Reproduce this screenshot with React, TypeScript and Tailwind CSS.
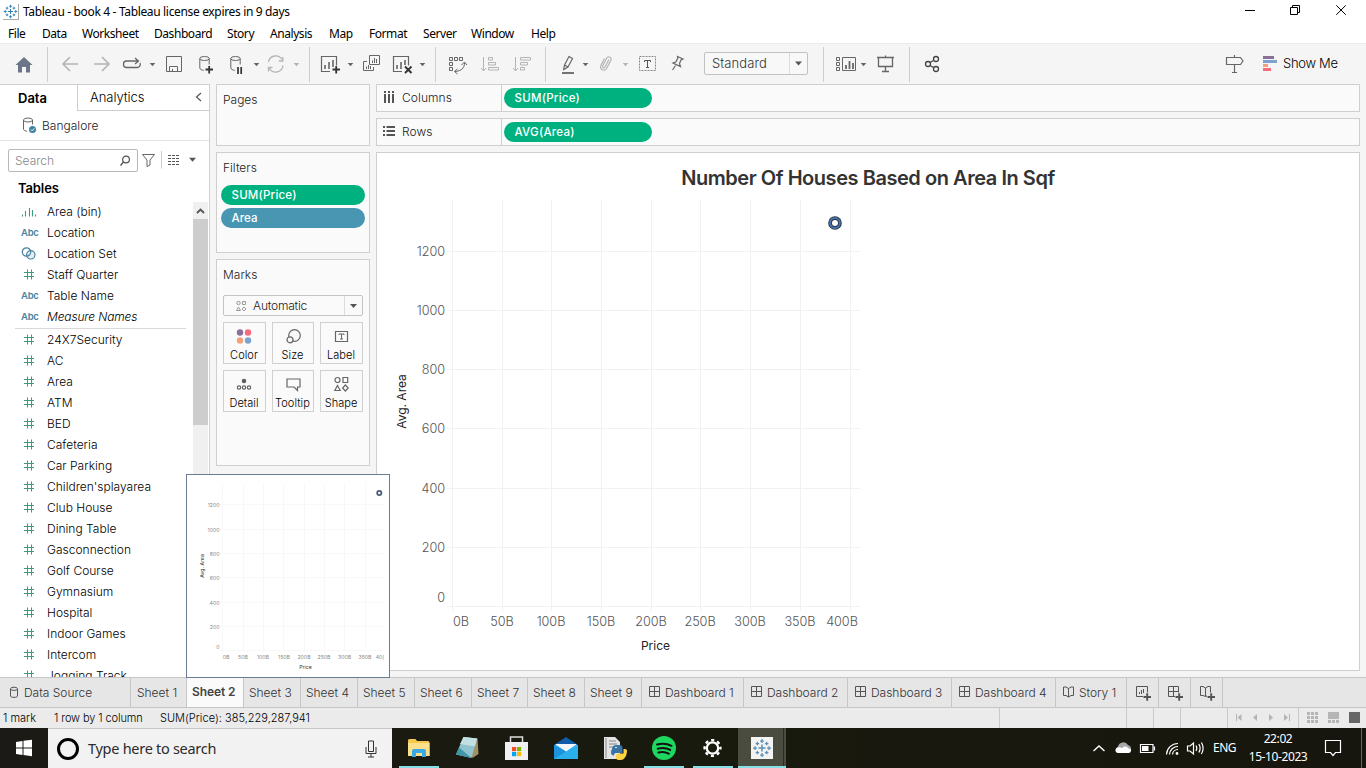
import React from "react";

type ArtProps = { x: number; y: number; w: number; h: number; children?: React.ReactNode; className?: string };

function Art({ x, y, w, h, children, className = "" }: ArtProps) {
  return (
    <svg
      width={w}
      height={h}
      viewBox={`${x} ${y} ${w} ${h}`}
      fill="none"
      stroke="#666"
      className={`block shrink-0 ${className}`}
    >
      {children}
    </svg>
  );
}

function Tool({ x, w, children }: { x: number; w: number; children?: React.ReactNode }) {
  return (
    <Art x={x} y={44} w={w} h={40}>
      {children}
    </Art>
  );
}

function Caret({ x, w, cx, color = "#666" }: { x: number; w: number; cx: number; color?: string }) {
  return (
    <Tool x={x} w={w}>
      <path d={`M${cx - 2.8} 63h5.6l-2.8 3.2z`} fill={color} stroke="none" />
    </Tool>
  );
}

function Sep() {
  return <div className="mt-[3px] h-[35px] w-px shrink-0 bg-[#cfcfcf]" />;
}

function TableauMark({ color = "#2f7fb0" }: { color?: string }) {
  return (
    <g stroke={color} strokeWidth="1">
      <path d="M8 5.2v5.6M5.2 8h5.6" strokeWidth="1.2" />
      <path d="M8 .8v3.2M6.5 2.4h3M8 12v3.2M6.5 13.6h3M2.4 6.5v3M.8 8H4M13.6 6.5v3M12 8h3.2" />
      <path d="M4.3 3v2.8M2.9 4.4h2.8M11.7 3v2.8M10.3 4.4h2.8M4.3 10.2V13M2.9 11.6h2.8M11.7 10.2V13M10.3 11.6h2.8" />
    </g>
  );
}

function TitleBar() {
  return (
    <div className="flex h-[23px] shrink-0 items-center">
      <svg width="16" height="16" viewBox="0 0 16 16" fill="none" className="ml-[3px] block border-r border-b border-[#aaa]">
        <TableauMark />
      </svg>
      <span className="ml-1 font-['Noto_Sans','Open_Sans',sans-serif] text-[12px] tracking-[-0.340px] text-black">
        Tableau - book 4 - Tableau license expires in 9 days
      </span>
      <Art x={1236} y={0} w={130} h={23} className="ml-auto">
        <g stroke="#000">
          <path d="M1245 10.5h10" />
          <path d="M1290.500 7.500h7v7h-7zM1292.500 7.500v-2h7v7h-2" />
          <path d="M1336.300 5.300l9.500 9.500M1345.800 5.300l-9.500 9.500" />
        </g>
      </Art>
    </div>
  );
}

function MenuBar() {
  return (
    <div className="flex h-5 shrink-0 items-center pt-[2px] pl-2 font-['Noto_Sans','Open_Sans',sans-serif] text-[12px] tracking-[-0.440px] text-black">
      <span className="w-[34px]">File</span>
      <span className="w-10">Data</span>
      <span className="w-[72px]">Worksheet</span>
      <span className="w-[73px]">Dashboard</span>
      <span className="w-[43px]">Story</span>
      <span className="w-[59px]">Analysis</span>
      <span className="w-10">Map</span>
      <span className="w-[54px]">Format</span>
      <span className="w-12">Server</span>
      <span className="w-[60px]">Window</span>
      <span>Help</span>
    </div>
  );
}

const LIGHT = "#b4b4b4";

function Toolbar() {
  return (
    <div className="flex h-[41px] shrink-0 items-start border-t border-[#ececec] bg-[#f5f5f5]">
      <Tool x={0} w={47}>
        <path d="M15.500 65L24 57l8.500 8H30v7.500h-4V67h-4v5.500h-4V65z" fill="#6b7688" stroke="none" />
      </Tool>
      <Sep />
      <Tool x={48} w={36}>
        <path d="M78 64H63M70 57l-7 7 7 7" stroke={LIGHT} strokeWidth="1.6" />
      </Tool>
      <Tool x={84} w={34}>
        <path d="M94 64h15M102 57l7 7-7 7" stroke={LIGHT} strokeWidth="1.6" />
      </Tool>
      <Tool x={118} w={26}>
        <path d="M138 61h-11.500a3 3 0 0 0-3 3v.500a3 3 0 0 0 3 3h11a3.200 3.200 0 0 0 2.500-4.500M135 58l3.500 3-3.500 3" strokeWidth="1.300" />
      </Tool>
      <Caret x={144} w={16} cx={152.500} />
      <Tool x={160} w={30}>
        <path d="M166.500 56.500h15v15h-15zM169.500 71.500v-5h8v5M172.500 71.500v-2.500" />
      </Tool>
      <Tool x={190} w={32}>
        <ellipse cx="204.500" cy="58.500" rx="4.700" ry="2" />
        <path d="M199.800 58.500v9.500c0 1.200 2 2.200 4 2.400M209.200 58.500v6" />
        <path d="M205.500 69.500h7.500M209.200 66v7.500" stroke="#333" strokeWidth="1.800" />
      </Tool>
      <Tool x={222} w={27}>
        <ellipse cx="235.500" cy="58.500" rx="4.700" ry="2" />
        <path d="M230.800 58.500v9.500c0 1.200 2 2.200 4 2.400M240.200 58.500v6" />
        <path d="M238 67v7M241.200 67v7" stroke="#333" strokeWidth="1.700" />
      </Tool>
      <Caret x={249} w={15} cx={256.500} />
      <Tool x={264} w={26}>
        <path d="M268.500 62a7.300 7.300 0 0 1 13.500-2.500M283 65.500a7.300 7.300 0 0 1-13.500 3M282.800 57v4h-4M268.500 71.500v-4h4" stroke={LIGHT} strokeWidth="1.300" />
      </Tool>
      <Caret x={290} w={19} cx={296.500} color={LIGHT} />
      <Sep />
      <Tool x={310} w={34}>
        <path d="M330 71.500h-8.500v-15h15v9" strokeWidth="1.200" />
        <path d="M325 69v-4M329 69v-7M333 67v-7" strokeWidth="1.600" />
        <path d="M332.500 69.500h7.500M336.200 66v7.500" stroke="#333" strokeWidth="1.800" />
      </Tool>
      <Caret x={344} w={14} cx={350.500} />
      <Tool x={358} w={28}>
        <path d="M369.500 55.500h10v9h-10zM367 61.500h-3.500v9h10v-3.500M372.500 63v-2.500M374.500 63v-5M376.500 63v-4M366.500 69v-2.500M368.500 69v-4M370.500 69v-3" />
      </Tool>
      <Tool x={386} w={30}>
        <path d="M402 71.500h-8.500v-15h15v9" strokeWidth="1.200" />
        <path d="M397 69v-4M401 69v-7M405 65v-5" strokeWidth="1.600" />
        <path d="M405 66.500l6.500 6.500M411.500 66.500l-6.500 6.500" stroke="#333" strokeWidth="1.900" />
      </Tool>
      <Caret x={416} w={19} cx={422.500} />
      <Sep />
      <Tool x={436} w={38}>
        <path d="M449.500 57.500h3v3h-3zM454.500 57.500h3v3h-3zM459.500 57.500h3v3h-3zM449.500 62.500h3v3h-3zM449.500 67.500h3v3h-3z" />
        <path d="M464.500 63c0 5-3 8-9.500 8.500M461.500 65l3-3 2.500 3M457.500 69l-3 2.500 3 2.500" />
      </Tool>
      <Tool x={474} w={31}>
        <path d="M483.500 57v13.500M481 68l2.500 3 2.500-3M488.500 57.500h4v2.500h-4zM488.500 62.500h7v2.500h-7zM488.500 67.500h10v2.500h-10z" stroke={LIGHT} />
      </Tool>
      <Tool x={505} w={40}>
        <path d="M515.500 57v13.500M513 68l2.500 3 2.500-3M520.500 57.500h10v2.500h-10zM520.500 62.500h7v2.500h-7zM520.500 67.500h4v2.500h-4z" stroke={LIGHT} />
      </Tool>
      <Sep />
      <Tool x={546} w={32}>
        <path d="M569 56.500l3.500 2-4.500 8.500-3.500-2zM564.500 65l-.800 4.500 4.300-2.500" strokeWidth="1.200" />
        <path d="M562 73h12" strokeWidth="1.800" />
      </Tool>
      <Caret x={578} w={15} cx={585.500} />
      <Tool x={593} w={26}>
        <path d="M609 59.500l-4 7.500c-.800 1.500-3 .500-2.300-1.200l4-7.500c1.500-2.600 5.500-.800 4.200 2l-4.200 8c-2 3.600-7.500 1.200-5.800-2.800l3.600-7" stroke={LIGHT} strokeWidth="1.200" />
      </Tool>
      <Caret x={619} w={16} cx={625.500} color={LIGHT} />
      <Tool x={635} w={25}>
        <path d="M639.500 56.500h16v14h-16z" strokeDasharray="2 1" stroke="#888" />
        <path d="M644.500 62v-1.500h6v1.500M647.500 60.500v7M646 67.500h3" stroke="#555" />
      </Tool>
      <Tool x={660} w={44}>
        <path d="M677.500 56.500l5.500 2.500-2 1-1.500 3.500 1 3-7.500-3.500 3-1.200 1.700-3.500zM675.500 65.500l-3 4.500" strokeWidth="1.200" />
      </Tool>
      <div className="mt-2 flex h-[23px] w-[104px] items-center rounded-[2px] border border-[#c2c2c2] bg-[#f8f8f8]">
        <span className="w-[84px] pl-[7px] text-[13px] font-light tracking-[0.100px] text-[#333]">Standard</span>
        <div className="flex h-full w-[18px] items-center justify-center border-l border-[#dcdcdc]">
          <svg width="7" height="5" viewBox="0 0 7 5"><path d="M0 .5h7l-3.500 4z" fill="#555" /></svg>
        </div>
      </div>
      <div className="w-[15px]" />
      <Sep />
      <Tool x={824} w={34}>
        <path d="M836.500 57.500h3v3h-3zM836.500 62.500h3v3h-3zM836.500 67.500h3v3h-3zM842.500 57.500h13v13h-13z" />
        <path d="M846 69v-4M849.500 69v-8M853 69v-6" strokeWidth="1.800" />
      </Tool>
      <Caret x={858} w={12} cx={863.500} />
      <Tool x={870} w={39}>
        <path d="M877 57.500h17M878.500 58v8.500h14V58M885.500 55.500v2M885.500 66.500v5M882 71.500h7" strokeWidth="1.300" />
      </Tool>
      <Sep />
      <Tool x={910} w={40}>
        <path d="M930 62.500l3.500-2M930 65.500l3.500 2" stroke="#444" strokeWidth="1.300" />
        <circle cx="928" cy="64" r="2.500" stroke="#444" strokeWidth="1.300" />
        <circle cx="936" cy="59" r="2.500" stroke="#444" strokeWidth="1.300" />
        <circle cx="936" cy="69" r="2.500" stroke="#444" strokeWidth="1.300" />
      </Tool>
      <div className="flex-1" />
      <Tool x={1220} w={32}>
        <path d="M1234.500 55v2.500M1234.500 64.500v8M1232 72.500h5M1226.500 57.500h14l2.500 3.500-2.500 3.500h-14z" strokeWidth="1.200" />
      </Tool>
      <Tool x={1252} w={31}>
        <g stroke="none">
          <path d="M1263 56h11v3h-11z" fill="#8a6f97" />
          <path d="M1263 60h14v3h-14z" fill="#7ba3cd" />
          <path d="M1263 64h5v3h-5z" fill="#f2a279" />
          <path d="M1263 68h8v3h-8z" fill="#f76c7c" />
        </g>
      </Tool>
      <span className="mt-[9px] w-[83px] text-[13px] leading-5 font-light tracking-[-0.300px] text-black">Show Me</span>
    </div>
  );
}

function FieldIcon({ kind }: { kind: string }) {
  if (kind === "abc")
    return <span className="w-8 pt-[2px] pl-[6px] text-[9.500px] font-semibold tracking-[-0.250px] text-[#4a83a0]">Abc</span>;
  return (
    <svg width="32" height="21" viewBox="0 0 32 21" fill="none" stroke="#3b9c76" className="block">
      {kind === "num" && <path d="M12.500 5.500v10M16.500 5.500v10M9 8.500h10M9 12.500h10" />}
      {kind === "bin" && <path d="M7.500 13.500v2M10.500 10v5.500M14.500 7v8.500M17.500 9v6.500M20.500 13.500v2" strokeWidth="1.100" />}
      {kind === "set" && (
        <g stroke="#4a83a0" strokeWidth="1.200">
          <circle cx="11.500" cy="9" r="4.200" />
          <circle cx="15.800" cy="11.800" r="4.200" fill="#4a83a0" fillOpacity=".15" />
        </g>
      )}
    </svg>
  );
}

const dimensions: [string, string][] = [
  ["bin", "Area (bin)"],
  ["abc", "Location"],
  ["set", "Location Set"],
  ["num", "Staff Quarter"],
  ["abc", "Table Name"],
  ["abc", "Measure Names"],
];

const measures = [
  "24X7Security", "AC", "Area", "ATM", "BED", "Cafeteria", "Car Parking", "Children'splayarea", "Club House",
  "Dining Table", "Gasconnection", "Golf Course", "Gymnasium", "Hospital", "Indoor Games", "Intercom", "Jogging Track",
];

function Field({ kind, name }: { kind: string; name: string }) {
  return (
    <div className="flex h-[21px] shrink-0 items-center">
      <FieldIcon kind={kind} />
      <span className={name === "Measure Names" ? "tracking-[-0.150px] italic" : ""}>{name}</span>
    </div>
  );
}

function DataPane() {
  return (
    <div className="flex w-[210px] shrink-0 flex-col border-t border-r border-[#cfcfcf] bg-white">
      <div className="flex h-[26px] shrink-0 text-[13px]">
        <div className="w-[77px] shrink-0 pl-[18px] leading-[26px] font-semibold text-black">Data</div>
        <div className="flex w-[132px] shrink-0 items-center border-b border-l border-[#cfcfcf] pt-px">
          <span className="w-[104px] shrink-0 pl-3 text-[13px] font-light tracking-[-0.050px] text-black">Analytics</span>
          <svg width="28" height="16" viewBox="0 0 28 16" fill="none" stroke="#555" className="shrink-0"><path d="M19 3L14.500 7l4.500 4" strokeWidth="1.200" /></svg>
        </div>
      </div>
      <div className="flex h-[30px] shrink-0 items-center border-b border-[#e2e2e2] text-[12px] font-light tracking-[0.020px] text-[#222]">
        <Art x={0} y={111} w={42} h={29}>
          <ellipse cx="28" cy="120" rx="4.500" ry="2" />
          <path d="M23.500 120v9c0 1.200 1.500 2 3.500 2.200M32.500 120v4.500" />
          <circle cx="32.500" cy="129.500" r="3.500" fill="#3c82a3" stroke="none" />
          <path d="M30.800 129.500l1.300 1.300 2.200-2.400" stroke="#fff" />
        </Art>
        Bangalore
      </div>
      <div className="flex shrink-0 items-center pt-2">
        <div className="ml-2 flex h-[23px] w-[130px] items-center rounded-[2px] border border-[#b8b8b8] text-[12px] font-light text-[#888]">
          <span className="w-[110px] pt-px pl-[6px]">Search</span>
          <svg width="12" height="14" viewBox="0 0 12 14" fill="none" stroke="#555"><circle cx="7" cy="5.500" r="3.400" strokeWidth="1.200" /><path d="M4.500 8L1.500 11.500" strokeWidth="1.300" /></svg>
        </div>
        <Art x={138} y={149} w={70} h={23}>
          <path d="M142.500 154.500h12l-4.500 5.500v5l-3 1.500V160z" />
          <path d="M161.500 151v17.500" stroke="#ccc" />
          <path d="M168 155.500h12M168 158.500h12M168 161.500h12M168 164.500h12" strokeDasharray="3 1" stroke="#555" />
          <path d="M189 157.800h7l-3.500 4z" fill="#555" stroke="none" />
        </Art>
      </div>
      <div className="shrink-0 pt-[6px] pl-[18px] text-[13px] leading-[20px] font-semibold tracking-[-0.120px] text-black">Tables</div>
      <div className="mt-[3px] flex min-h-0 flex-1">
        <div className="flex w-[193px] flex-col overflow-hidden pl-[15px] text-[12px] font-light tracking-[0.010px] text-black">
          {dimensions.map(([k, n]) => <Field key={n} kind={k} name={n} />)}
          <div className="mt-px mr-[7px] h-px shrink-0 bg-[#d9d9d9]" />
          {measures.map((n) => <Field key={n} kind="num" name={n} />)}
        </div>
        <div className="mt-px flex w-[15px] flex-col bg-[#f0f0f0]">
          <svg width="15" height="17" viewBox="0 0 15 17" fill="none" stroke="#555"><path d="M4 11l3.500-3.500L11 11" strokeWidth="1.800" /></svg>
          <div className="h-[206px] bg-[#cdcdcd]" />
        </div>
      </div>
    </div>
  );
}

function MarkButton({ label, children }: { label: string; children: React.ReactNode }) {
  return (
    <div className="flex h-[42px] flex-col items-center border border-[#d0d0d0] bg-[#fafafa] pr-px">
      <svg width="24" height="24" viewBox="0 0 24 24" fill="none" stroke="#666" strokeWidth="1.200" className="mt-[1px] block shrink-0">{children}</svg>
      <span className="pt-px text-[11px] leading-[13px] font-light tracking-[0.050px] whitespace-nowrap text-black">{label}</span>
    </div>
  );
}

function Cards() {
  return (
    <div className="flex w-[166px] shrink-0 flex-col gap-[6px] pr-[6px] pl-[6px] text-[12px] leading-[18px] font-light text-[#222]">
      <div className="h-[62px] border border-[#cfcfcf] bg-[#fafafa] px-[6px] pt-[6px]">Pages</div>
      <div className="h-[101px] border border-[#cfcfcf] bg-[#fafafa] px-1">
        <div className="pt-[6px] pl-[2px]">Filters</div>
        <div className="mt-2 h-5 rounded-full bg-[#00b180] pl-[10.500px] text-[11.500px] leading-5 font-medium tracking-[0.200px] text-white">SUM(Price)</div>
        <div className="mt-[3px] h-5 rounded-full bg-[#4996b2] pl-[10.500px] text-[11.500px] leading-5 font-medium tracking-[0.100px] text-white">Area</div>
      </div>
      <div className="h-[207px] border border-[#cfcfcf] bg-[#fafafa] px-[6px] pt-[6px]">
        Marks
        <div className="mt-[11px] flex h-[21px] items-center rounded-[2px] border border-[#c4c4c4]">
          <svg width="29" height="18" viewBox="0 0 29 18" fill="none" stroke="#999" className="shrink-0">
            <circle cx="14.500" cy="6" r="1.700" /><path d="M18.500 4.500h3v3h-3zM14.500 10l2 3.500h-4zM20 10l2 2-2 2-2-2z" />
          </svg>
          <span className="w-[91px] shrink-0 text-[12px] tracking-[-0.200px]">Automatic</span>
          <div className="flex h-full flex-1 items-center justify-center border-l border-[#dcdcdc]">
            <svg width="7" height="4" viewBox="0 0 7 4"><path d="M0 0h7l-3.500 4z" fill="#555" /></svg>
          </div>
        </div>
        <div className="mt-[6px] grid grid-cols-[43px_42px_43px] gap-[6px]">
          <MarkButton label="Color">
            <g stroke="none">
              <circle cx="8" cy="8.500" r="3.200" fill="#8a6f97" /><circle cx="16" cy="8.500" r="3.200" fill="#f76c7c" />
              <circle cx="8" cy="16.500" r="3.200" fill="#f2a279" /><circle cx="16" cy="16.500" r="3.200" fill="#7ba3cd" />
            </g>
          </MarkButton>
          <MarkButton label="Size">
            <circle cx="13.500" cy="11.500" r="5.800" /><circle cx="9" cy="15.800" r="3" fill="#fafafa" />
          </MarkButton>
          <MarkButton label="Label">
            <path d="M6.500 7.500h12v10h-12z" /><path d="M10 11v-1h5v1M12.500 10v5M11 15h3" strokeWidth="1" />
          </MarkButton>
          <MarkButton label="Detail">
            <circle cx="12" cy="9" r="1.700" fill="#555" /><circle cx="7" cy="15.500" r="1.700" /><circle cx="12" cy="15.500" r="1.700" /><circle cx="17" cy="15.500" r="1.700" />
          </MarkButton>
          <MarkButton label="Tooltip"><path d="M6 7h13v8h-2.500v3.500L13 15H6z" /></MarkButton>
          <MarkButton label="Shape">
            <circle cx="8.500" cy="8" r="2.500" /><path d="M14 5.500h4.700v5H14zM8.500 13.500l2.700 5H5.800zM16.400 13l2.800 3-2.800 3-2.800-3z" />
          </MarkButton>
        </div>
      </div>
    </div>
  );
}

function Shelf({ label, pill, rows }: { label: string; pill: string; rows?: boolean }) {
  return (
    <div className="flex h-7 border border-[#cfcfcf] bg-[#fafafa]">
      <div className="flex w-[125px] items-center border-r border-[#cfcfcf] text-[12px] font-light tracking-[0.080px] text-[#222]">
        <svg width="25" height="26" viewBox="0 0 25 26" fill="none" stroke="#555" strokeWidth="2">
          {rows ? (
            <path d="M6 8h2M9.500 8H18M6 12h2M9.500 12H18M6 16h2M9.500 16H18" />
          ) : (
            <path d="M8 6v2M8 9v9M12 6v2M12 9v9M16 6v2M16 9v9" />
          )}
        </svg>
        {label}
      </div>
      <div className="mt-[3px] ml-[2px] h-5 w-[148px] rounded-full bg-[#00b180] pl-[10.500px] text-[11.500px] leading-5 font-medium tracking-[0.250px] text-white">{pill}</div>
    </div>
  );
}

const gx = [452.5, 502.5, 551.5, 601.5, 651.5, 700.5, 750.5, 800.5, 850.5];
const gy = [251.5, 310.5, 369.5, 428.5, 488.5, 547.5, 606.5];
const xLabels: [string, number][] = [
  ["0B", 461], ["50B", 502], ["100B", 551], ["150B", 601], ["200B", 651], ["250B", 700], ["300B", 750], ["350B", 800], ["400B", 842],
];
const yLabels: [string, number][] = [
  ["1200", 256], ["1000", 315], ["800", 374], ["600", 433], ["400", 493], ["200", 552], ["0", 602],
];

function View() {
  return (
    <div className="mb-[6px] flex flex-1 flex-col border border-[#cfcfcf] bg-white">
      <div className="h-[47px] text-center text-[20px] leading-[50px] font-semibold tracking-[-0.450px] text-[#333]">
        Number Of Houses Based on Area In Sqf
      </div>
      <Art x={377} y={200} w={490} h={469}>
        <g stroke="#f1f1f1">
          {gx.map((x) => <path key={x} d={`M${x} 200V611`} />)}
          {gy.map((y) => <path key={y} d={`M447 ${y}H860`} />)}
        </g>
        <circle cx="835" cy="223" r="6.800" fill="#2c2f36" stroke="none" />
        <circle cx="835" cy="223" r="4.900" stroke="#4377b4" strokeWidth="2" fill="#2c2f36" />
        <circle cx="835" cy="223" r="3" fill="#fff" stroke="none" />
        <g stroke="none" fill="#555" fontSize="12.700" fontWeight="300" letterSpacing="-0.050">
          {xLabels.map(([t, x]) => <text key={t} x={x} y="626" textAnchor="middle">{t}</text>)}
          {yLabels.map(([t, y]) => <text key={t} x="445" y={y} textAnchor="end">{t}</text>)}
        </g>
        <g stroke="none" fill="#222" fontSize="12" textAnchor="middle">
          <text x="655.500" y="650">Price</text>
          <text transform="translate(406 401.500) rotate(-90)">Avg. Area</text>
        </g>
      </Art>
    </div>
  );
}

const tx = [222.5, 243.5, 263.5, 283.5, 304.5, 324.5, 344.5, 365.5];
const ty = [504.5, 529.5, 553.5, 577.5, 602.5, 626.5, 650.5];
const tLabels: [string, number][] = [
  ["0B", 226], ["50B", 243], ["100B", 263], ["150B", 284], ["200B", 304], ["250B", 324], ["300B", 344.5], ["350B", 365], ["40(", 380],
];

function Preview() {
  return (
    <div className="absolute top-[474px] left-[186px] h-[204px] w-[204px] border border-[#6b7d95] bg-white">
      <Art x={187} y={475} w={202} h={202}>
        <g stroke="#f8f8f8">
          {tx.map((x) => <path key={x} d={`M${x} 483V652`} />)}
          {ty.map((y) => <path key={y} d={`M219 ${y}H384`} />)}
        </g>
        <circle cx="379.300" cy="493" r="2.100" stroke="#4a5b78" strokeWidth="1.800" />
        <g stroke="none" fill="#888" fontSize="5.200">
          {tLabels.map(([t, x]) => <text key={t} x={x} y="659" textAnchor="middle">{t}</text>)}
          {["1200", "1000", "800", "600", "400", "200"].map((t, i) => (
            <text key={t} x="219.500" y={ty[i] + 2} textAnchor="end">{t}</text>
          ))}
          <text x="219.500" y="648.500" textAnchor="end">0</text>
        </g>
        <g stroke="none" fill="#333" fontSize="5.200" textAnchor="middle">
          <text x="305.500" y="669">Price</text>
          <text transform="translate(204 566) rotate(-90)">Avg. Area</text>
        </g>
      </Art>
    </div>
  );
}

function GridGlyph() {
  return (
    <svg width="12" height="12" viewBox="0 0 12 12" fill="none" stroke="#555" className="mr-[4px] mb-px block shrink-0">
      <path d="M.5 .5h10v10H.5zM5.500 .5v10M.5 5.500h10" />
    </svg>
  );
}

function BookPath() {
  return <path d="M.5 1h2.500L5.500 2.500 8 1h2.500v8.500H8L5.500 11 3 9.500H.5zM5.500 2.500V11" />;
}

const tab = "flex h-full shrink-0 items-center border-r border-[#c6c6c6]";

function SheetTabs() {
  return (
    <div className="flex h-[31px] shrink-0 border-t border-b border-[#c6c6c6] bg-[#e6e6e6] text-[12px] font-light tracking-[-0.020px] text-[#333]">
      <div className={`${tab} w-[131px] pl-[6px]`}>
        <svg width="18" height="14" viewBox="0 0 18 14" fill="none" stroke="#555" className="block">
          <path d="M4.500 3v7c0 1.800 7 1.800 7 0V3" /><ellipse cx="8" cy="2.800" rx="3.500" ry="1.600" />
        </svg>
        Data Source
      </div>
      <div className={`${tab} w-14 pl-[6px]`}>Sheet 1</div>
      <div className="flex h-full w-[57px] shrink-0 items-center border-r border-[#c6c6c6] bg-[#fafafa] pb-[2px] pl-[5px] text-[12px] font-semibold tracking-[-0.100px] text-[#444]">Sheet 2</div>
      <div className={`${tab} w-[57px] pl-[5px]`}>Sheet 3</div>
      <div className={`${tab} w-[57px] pl-[5px]`}>Sheet 4</div>
      <div className={`${tab} w-[57px] pl-[5px]`}>Sheet 5</div>
      <div className={`${tab} w-[57px] pl-[5px]`}>Sheet 6</div>
      <div className={`${tab} w-14 pl-[5px]`}>Sheet 7</div>
      <div className={`${tab} w-[57px] pl-[5px]`}>Sheet 8</div>
      <div className={`${tab} w-[57px] pl-[5px]`}>Sheet 9</div>
      <div className={`${tab} w-[102px] pl-[7px]`}><GridGlyph />Dashboard 1</div>
      <div className={`${tab} w-[104px] pl-[7px]`}><GridGlyph />Dashboard 2</div>
      <div className={`${tab} w-[104px] pl-[7px]`}><GridGlyph />Dashboard 3</div>
      <div className={`${tab} w-[104px] pl-[7px]`}><GridGlyph />Dashboard 4</div>
      <div className={`${tab} w-[71px] pl-[7px]`}>
        <svg width="12" height="12" viewBox="0 0 12 12" fill="none" stroke="#555" className="mr-[4px] mb-px block"><BookPath /></svg>
        Story 1
      </div>
      <div className={`${tab} w-8 pl-[9px]`}>
        <svg width="16" height="16" viewBox="0 0 16 16" fill="none" stroke="#555">
          <path d="M7 11.500H.5V1.500h11v6M3.500 9V7M5.500 9V5M7.500 8V4" /><path d="M7.500 12h7.500M11.200 8.200v7.500" strokeWidth="1.900" />
        </svg>
      </div>
      <div className={`${tab} w-8 pl-[9px]`}>
        <svg width="16" height="16" viewBox="0 0 16 16" fill="none" stroke="#555">
          <path d="M7 11.500H.5V1.500h10v6M5.500 1.500v10M.5 6.500h10" /><path d="M7.500 12h7.500M11.200 8.200v7.500" strokeWidth="1.900" />
        </svg>
      </div>
      <div className={`${tab} w-8 pl-[9px]`}>
        <svg width="16" height="16" viewBox="0 0 16 16" fill="none" stroke="#555">
          <path d="M7 11l-1.500.500L3 10.500H.5V1.500H3L5.500 3 8 1.500h2.500v6M5.500 3v8.500" /><path d="M7.500 12h7.500M11.200 8.200v7.500" strokeWidth="1.900" />
        </svg>
      </div>
    </div>
  );
}

function StatusBar() {
  return (
    <div className="flex h-5 shrink-0 items-center bg-[#ebebeb] text-[11px] font-light text-black">
      <span className="w-[54px] pl-[3px]">1 mark</span>
      <span className="w-[106px] tracking-[-0.100px]">1 row by 1 column</span>
      <span className="tracking-[0.020px]">SUM(Price): 385,229,287,941</span>
      <div className="ml-auto h-full w-[127px] border-l border-[#c9c9c9]" />
      <div className="h-full w-[27px] border-l border-[#c9c9c9]" />
      <div className="h-full w-[27px] border-l border-[#c9c9c9]" />
      <div className="h-full w-[47px] border-l border-[#c9c9c9]" />
      <Art x={1227} y={708} w={139} h={20}>
        <path d="M1227.500 708v20M1298.500 708v20" stroke="#c9c9c9" />
        <g fill="#b5b5b5" stroke="none">
          <path d="M1236 714h1v7h-1zM1241.500 714v7l-4-3.500zM1257 714v7l-4-3.500zM1269 714v7l4-3.500zM1284 714v7l4-3.500zM1289 714h1v7h-1z" />
          <path d="M1307 712h3v3h-3zM1311 712h3v3h-3zM1315 712h3v3h-3zM1307 716h3v3h-3zM1311 716h3v3h-3zM1315 716h3v3h-3zM1307 720h3v3h-3zM1311 720h3v3h-3zM1315 720h3v3h-3z" />
          <path d="M1328 712h11v7h-11zM1328 720h3v3h-3zM1332 720h3v3h-3zM1336 720h3v3h-3z" />
        </g>
        <path d="M1349 712h11v11h-11z" fill="#666" stroke="none" />
      </Art>
    </div>
  );
}

function TaskButton({ x, w, line, children, active }: { x: number; w: number; line?: boolean; active?: boolean; children: React.ReactNode }) {
  return (
    <div className={active ? "flex h-10 shrink-0 flex-col items-center bg-[#4b4c40]" : "flex h-10 shrink-0 flex-col items-center"}>
      <Art x={x} y={728} w={w} h={38}>{children}</Art>
      {line && <div className={active ? "h-[2px] w-full bg-[#86dfe6]" : "h-[2px] w-10 bg-[#86dfe6]"} />}
    </div>
  );
}

function Taskbar() {
  return (
    <div className="flex h-10 shrink-0 bg-gradient-to-r from-[#1c1a16] via-[#191a0e] to-[#17160e] font-['Noto_Sans','Open_Sans',sans-serif]">
      <Art x={0} y={728} w={48} h={40}>
        <g fill="#fff" stroke="none">
          <path d="M16 742l6.500-1v6.500H16zM23.500 740.800l8.500-1.100v7.800h-8.500zM16 748.500h6.500v6.500l-6.500-.900zM23.500 748.500h8.500v7.800l-8.500-1.200z" />
        </g>
      </Art>
      <div className="flex w-[344px] shrink-0 items-center border-t border-[#c8c8c8] bg-[#f2f2f2]">
        <div className="mx-[9px] h-[22px] w-[22px] rounded-full border-[3px] border-black" />
        <span className="w-[276px] text-[14.500px] tracking-[-0.280px] text-[#2b2b2b]">Type here to search</span>
        <svg width="14" height="18" viewBox="0 0 14 18" fill="none" stroke="#333"><path d="M4.500 1h5v10.500h-5zM2 7v6.500h10V7M7 13.500v3.500M4 17h6" /></svg>
      </div>
      <TaskButton x={392} w={54} line>
        <g stroke="none">
          <path d="M408 740.500q0-1.500 1.500-1.500h6l1.500 2h11q1.500 0 1.500 1.500V756h-21.500z" fill="#f7c94b" />
          <path d="M408 743h21.500v13H408z" fill="#fbe08c" />
          <path d="M412 757v-6q0-2 2-2h10q2 0 2 2v6h-4v-4h-6v4z" fill="#3aa8e4" />
        </g>
      </TaskButton>
      <TaskButton x={446} w={42}>
        <g stroke="none">
          <path d="M463 737l14.500 1.500 1 15.500-6 4z" fill="#a38f66" />
          <path d="M463.500 737l13.500 1.500-5.500 19.500-15.500-3.500z" fill="#8fc3cf" />
          <path d="M463.500 737l13.500 1.500-2 8-15-2.500z" fill="#c3dfe4" />
          <path d="M471.500 758l-15.500-3.500 3-7z" fill="#3f97aa" />
        </g>
      </TaskButton>
      <TaskButton x={488} w={56}>
        <path d="M510.500 743v-6h12v6" stroke="#ddd" strokeWidth="1.500" />
        <g stroke="none">
          <path d="M505 742h23v18h-23z" fill="#f0f0f0" />
          <path d="M512 747h4.200v4.200H512z" fill="#f25022" /><path d="M517 747h4.200v4.200H517z" fill="#7fba00" />
          <path d="M512 752h4.200v4.200H512z" fill="#00a4ef" /><path d="M517 752h4.200v4.200H517z" fill="#ffb900" />
        </g>
      </TaskButton>
      <TaskButton x={544} w={48}>
        <g stroke="none">
          <path d="M554 745l12-8 12 8v4h-24z" fill="#0f5ca8" />
          <path d="M554 745h24v14h-24z" fill="#2bb0ee" />
          <path d="M555 744h22l-11 7.500z" fill="#f4f7fa" />
          <path d="M554 745l12 6.500-12 7.500z" fill="#1c93dc" />
        </g>
      </TaskButton>
      <TaskButton x={592} w={48}>
        <g stroke="none">
          <path d="M604 737h11l5 5v17h-16z" fill="#e4e4e4" />
          <path d="M606 738v20M609 741h7M609 744h8M609 747h6" stroke="#888" />
          <path d="M612 749.500q0-4.500 4.500-4.500h3q3 0 3 3v5h-7q-1.500 0-1.500 2.500-3 0-3-3 0-3 1-3z" fill="#3873a8" />
          <path d="M627 750.500q0 6-4 9-6 1.500-7-1v-3q0-2 2.500-2h5v-4.500q3.500-.5 3.500 1.500z" fill="#ffd342" />
          <circle cx="616" cy="747.500" r=".8" fill="#fff" />
        </g>
      </TaskButton>
      <TaskButton x={640} w={48} line>
        <circle cx="664" cy="748" r="12" fill="#1ed760" stroke="none" />
        <path d="M657 744.500q8-2.200 14.500 1.300M657.700 748.700q7-1.800 12.500 1.200M658.300 752.500q6-1.400 10.500 1.200" stroke="#111" strokeWidth="2" strokeLinecap="round" />
      </TaskButton>
      <TaskButton x={688} w={50} line>
        <circle cx="712.500" cy="748" r="5.700" stroke="#fff" strokeWidth="2.300" />
        <circle cx="712.500" cy="748" r="7.900" stroke="#fff" strokeWidth="2.400" strokeDasharray="3.100 3.100" strokeDashoffset="1.550" />
      </TaskButton>
      <TaskButton x={738} w={48} line active>
        <path d="M751 737h22v22h-22z" fill="#f3f3f3" stroke="none" />
        <g transform="translate(752 738) scale(1.250)"><TableauMark color="#5b8fb5" /></g>
        <path d="M783.500 728v40" stroke="#2a2b22" />
      </TaskButton>
      <div className="flex-1" />
      <Art x={1086} y={728} w={124} h={40}>
        <g stroke="#fff" strokeWidth="1.200">
          <path d="M1093.500 751l5.500-5 5.500 5" strokeWidth="1.400" />
          <path d="M1118 752.500a3.500 3.500 0 0 1 0-6 5.500 5.500 0 0 1 10-1.500 4 4 0 0 1 1 7.500z" fill="#a8a8a8" stroke="none" />
          <path d="M1117.500 753a2.800 2.800 0 0 1 .5-5.500q2-.800 4 .500 4-3 6.500 .5 3 0 2.500 2.500-.5 2-2.500 2z" fill="#fff" stroke="none" />
          <path d="M1140.500 744.500h12.500v8h-12.500zM1154.500 746.500v4" />
          <path d="M1142 746h6.500v5h-6.500z" fill="#fff" stroke="none" />
          <path d="M1166.500 754.500a11.500 11.500 0 0 1 11.500-11M1169.500 754.500a8.500 8.500 0 0 1 8.500-8M1172.500 754.500a5.500 5.500 0 0 1 5.500-5" />
          <circle cx="1177" cy="753.500" r="1.400" fill="#fff" stroke="none" />
          <path d="M1187.500 746h2.500l3.500-3v11l-3.500-3h-2.500zM1196 745.500q1.700 2.700 0 5.500M1198.800 744q2.700 4.200 0 8.500M1201.400 742.500q3.500 5.700 0 11.500" />
        </g>
      </Art>
      <span className="w-[34px] pl-[3px] text-[12px] leading-[39px] tracking-[-0.500px] text-white">ENG</span>
      <div className="w-[68px] pt-[2px] text-center text-[12px] leading-[18px] tracking-[-0.400px] text-white">
        <div>22:02</div>
        <div>15-10-2023</div>
      </div>
      <Art x={1312} y={728} w={54} h={40}>
        <path d="M1325.500 740.500h15v12h-5l-2.500 3-2.500-3h-5z" stroke="#fff" strokeWidth="1.200" />
        <path d="M1361.500 728v40" stroke="#666" />
      </Art>
    </div>
  );
}

export default function App() {
  return (
    <div className="relative flex h-[768px] w-[1366px] flex-col overflow-hidden bg-white font-[Inter,'Noto_Sans',sans-serif]">
      <TitleBar />
      <MenuBar />
      <Toolbar />
      <div className="flex h-[593px] shrink-0 bg-[#f5f5f5]">
        <DataPane />
        <Cards />
        <div className="flex w-[984px] shrink-0 flex-col gap-[6px]">
          <Shelf label="Columns" pill="SUM(Price)" />
          <Shelf label="Rows" pill="AVG(Area)" rows />
          <View />
        </div>
      </div>
      <SheetTabs />
      <StatusBar />
      <Taskbar />
      <Preview />
    </div>
  );
}
